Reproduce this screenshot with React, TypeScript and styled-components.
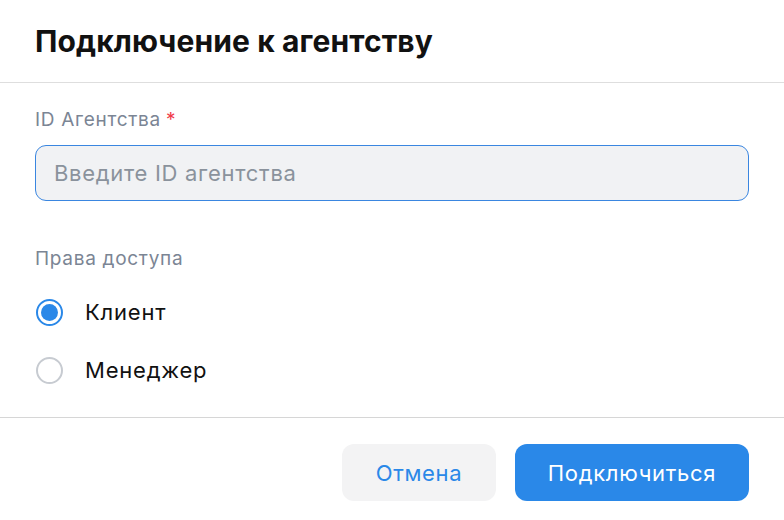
import styled, { createGlobalStyle } from "styled-components";
import { useState } from "react";

const GlobalStyle = createGlobalStyle`
  body {
    margin: 0;
    background: #ffffff;
    font-family: Inter, "Noto Sans", sans-serif;
  }
`;

const Modal = styled.div`
  width: 784px;
  height: 520px;
  background: #ffffff;
  display: flex;
  flex-direction: column;
`;

const Header = styled.div`
  height: 83px;
  box-sizing: border-box;
  padding: 0 35px;
  display: flex;
  align-items: center;
  border-bottom: 1px solid #dedede;
`;

const Title = styled.h1`
  margin: 0;
  font-size: 30px;
  font-weight: 700;
  color: #111111;
  letter-spacing: 0.1px;
`;

const Body = styled.div`
  flex: 1;
  padding: 25px 35px 0;
  border-bottom: 1px solid #d6d6d6;
`;

const Field = styled.div`
  display: flex;
  flex-direction: column;
  margin-bottom: 46px;
`;

const Label = styled.label`
  font-size: 19px;
  line-height: 24px;
  letter-spacing: 0.7px;
  color: #7b8594;
  margin-bottom: 13px;
`;

const Required = styled.span`
  color: #f03a4a;
  margin-left: 5px;
`;

const Input = styled.input`
  height: 56px;
  box-sizing: border-box;
  border: 1px solid #3a86e0;
  border-radius: 11px;
  background: #f1f2f4;
  padding: 0 18px;
  font-family: inherit;
  font-size: 22px;
  letter-spacing: 0.7px;
  color: #1a1a1a;
  outline: none;
  &::placeholder {
    color: #8a929c;
  }
`;

const RadioGroup = styled.div`
  display: flex;
  flex-direction: column;
  gap: 32px;
  margin-top: 28px;
`;

const RadioRow = styled.label`
  display: flex;
  align-items: center;
  gap: 22px;
  height: 26px;
  cursor: pointer;
  font-size: 22px;
  letter-spacing: 0.8px;
  color: #111111;
`;

const RadioDot = styled.span<{ $checked: boolean }>`
  width: 27px;
  height: 27px;
  margin-left: 1px;
  box-sizing: border-box;
  border-radius: 50%;
  border: 2px solid ${(p) => (p.$checked ? "#2a88e8" : "#c7cbd1")};
  display: flex;
  align-items: center;
  justify-content: center;
  background: #ffffff;
  &::after {
    content: "";
    width: 17px;
    height: 17px;
    border-radius: 50%;
    background: ${(p) => (p.$checked ? "#2a88e8" : "transparent")};
  }
`;

const Footer = styled.div`
  display: flex;
  justify-content: flex-end;
  gap: 19px;
  padding: 26px 35px 19px;
`;

const Button = styled.button<{ $primary?: boolean }>`
  height: 57px;
  border: none;
  border-radius: 12px;
  padding: 0 30px;
  font-family: inherit;
  font-size: 22px;
  letter-spacing: 0.7px;
  cursor: pointer;
  background: ${(p) => (p.$primary ? "#2a88e8" : "#f3f3f4")};
  color: ${(p) => (p.$primary ? "#ffffff" : "#2a88e8")};
`;

const roles = ["Клиент", "Менеджер"];

export default function App() {
  const [role, setRole] = useState("Клиент");
  return (
    <>
      <GlobalStyle />
      <Modal>
        <Header>
          <Title>Подключение к агентству</Title>
        </Header>
        <Body>
          <Field>
            <Label>
              ID Агентства<Required>*</Required>
            </Label>
            <Input placeholder="Введите ID агентства" />
          </Field>
          <Label>Права доступа</Label>
          <RadioGroup>
            {roles.map((r) => (
              <RadioRow key={r} onClick={() => setRole(r)}>
                <RadioDot $checked={role === r} />
                {r}
              </RadioRow>
            ))}
          </RadioGroup>
        </Body>
        <Footer>
          <Button style={{ width: 154 }}>Отмена</Button>
          <Button $primary style={{ width: 234 }}>Подключиться</Button>
        </Footer>
      </Modal>
    </>
  );
}
